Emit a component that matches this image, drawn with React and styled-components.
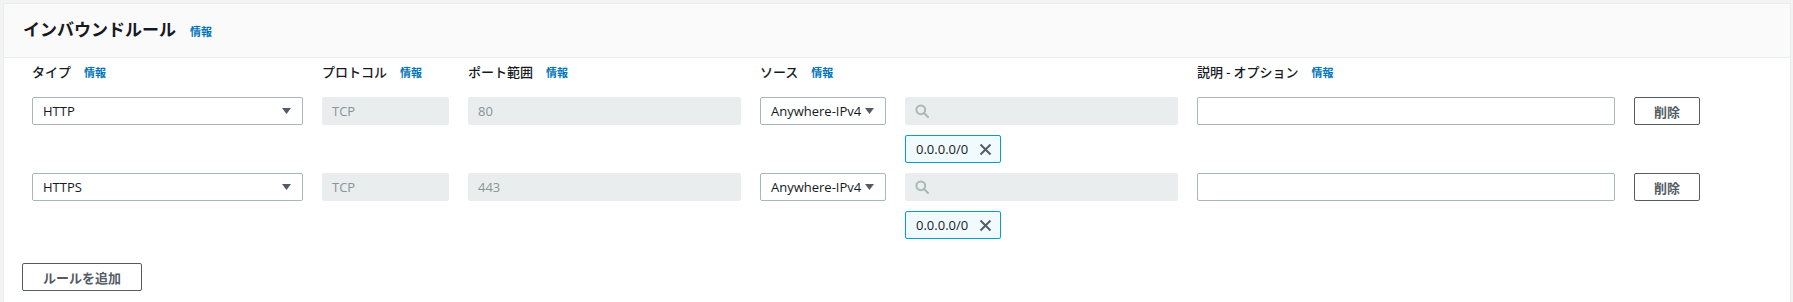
import React from 'react'
import styled, { createGlobalStyle } from 'styled-components'

const GlobalStyle = createGlobalStyle`
  html, body {
    margin: 0;
    padding: 0;
    background: #f2f3f3;
  }
  body {
    font-family: "Open Sans", "Noto Sans CJK JP", sans-serif;
    color: #16191f;
  }
`

const COLUMNS = '271px 127px 273px 126px 273px 418px 66px'

const Page = styled.div`
  padding: 3px 2px 0 3px;
`

const Panel = styled.section`
  background: #fff;
  border: 1px solid #eaeded;
  border-bottom: none;
  height: 299px;
  box-sizing: border-box;
`

const Header = styled.header`
  height: 54px;
  box-sizing: border-box;
  padding: 0 19px 4px;
  background: #fafafa;
  border-bottom: 1px solid #eaeded;
  display: flex;
  align-items: center;
`

const TitleLine = styled.div`
  display: flex;
  align-items: baseline;
  gap: 14px;
`

const Title = styled.h2`
  margin: 0;
  font-family: "Noto Sans CJK JP", sans-serif;
  font-size: 17px;
  font-weight: 700;
  line-height: 22px;
`

const Info = styled.a`
  font-family: "Noto Sans CJK JP", sans-serif;
  font-size: 11px;
  font-weight: 700;
  color: #0073bb;
  text-decoration: none;
`

const Body = styled.div`
  padding: 5px 18px 0;
`

const Grid = styled.div`
  display: grid;
  grid-template-columns: ${COLUMNS};
  column-gap: 19px;
  margin-left: 10px;
  margin-bottom: ${p => p.$mb || 0}px;
  align-items: start;
`

const Label = styled.div`
  grid-column: ${p => p.$col};
  display: flex;
  align-items: baseline;
  gap: 13px;
  font-family: "Noto Sans CJK JP", sans-serif;
  font-size: 13px;
  font-weight: 500;
  line-height: 18px;
  white-space: nowrap;
`

const Select = styled.div`
  height: 28px;
  box-sizing: border-box;
  border: 1px solid #aab7b8;
  border-radius: 2px;
  background: #fff;
  padding: 0 11px 0 10px;
  display: flex;
  align-items: center;
  justify-content: space-between;
  font-size: 13px;
  white-space: nowrap;
`

const ReadOnly = styled.div`
  height: 28px;
  box-sizing: border-box;
  border-radius: 2px;
  background: #eaeded;
  color: #879596;
  padding: 0 10px;
  display: flex;
  align-items: center;
  font-size: 13px;
`

const Stack = styled.div`
  display: flex;
  flex-direction: column;
  align-items: flex-start;
  gap: 10px;
`

const Search = styled(ReadOnly)`
  align-self: stretch;
`

const Token = styled.div`
  height: 28px;
  width: 96px;
  box-sizing: border-box;
  border: 1px solid #00a1c9;
  border-radius: 2px;
  background: #f1faff;
  padding: 0 8px 0 10px;
  display: flex;
  align-items: center;
  justify-content: space-between;
  font-size: 13px;
`

const TextInput = styled.input`
  height: 28px;
  width: 100%;
  box-sizing: border-box;
  border: 1px solid #aab7b8;
  border-radius: 2px;
  padding: 0 10px;
  font: inherit;
  font-size: 13px;
  outline: none;
`

const Button = styled.button`
  height: 28px;
  width: ${p => (p.$w ? `${p.$w}px` : 'auto')};
  box-sizing: border-box;
  padding: 0 ${p => p.$pad || 0}px;
  border: 1px solid #545b64;
  border-radius: 2px;
  background: #fff;
  color: #545b64;
  font-family: "Noto Sans CJK JP", sans-serif;
  font-size: 13px;
  font-weight: 700;
  cursor: pointer;
`

const Caret = () => (
  <svg width="9" height="6" viewBox="0 0 9 6">
    <polygon points="0,0 9,0 4.5,6" fill="#545b64" />
  </svg>
)

const SearchIcon = () => (
  <svg width="14" height="14" viewBox="0 0 14 14" fill="none" stroke="#aab7b8" strokeWidth="2">
    <circle cx="5.8" cy="5.8" r="4.4" />
    <line x1="9" y1="9" x2="13" y2="13" strokeLinecap="round" />
  </svg>
)

const CloseIcon = () => (
  <svg width="13" height="13" viewBox="0 0 13 13" stroke="#545b64" strokeWidth="2">
    <line x1="1.5" y1="1.5" x2="11.5" y2="11.5" />
    <line x1="11.5" y1="1.5" x2="1.5" y2="11.5" />
  </svg>
)

const rules = [
  { type: 'HTTP', protocol: 'TCP', port: '80', source: 'Anywhere-IPv4', cidr: '0.0.0.0/0' },
  { type: 'HTTPS', protocol: 'TCP', port: '443', source: 'Anywhere-IPv4', cidr: '0.0.0.0/0' },
]

const RuleRow = ({ rule }) => (
  <Grid $mb={10}>
    <Select>
      <span>{rule.type}</span>
      <Caret />
    </Select>
    <ReadOnly>{rule.protocol}</ReadOnly>
    <ReadOnly>{rule.port}</ReadOnly>
    <Select>
      <span>{rule.source}</span>
      <Caret />
    </Select>
    <Stack>
      <Search>
        <SearchIcon />
      </Search>
      <Token>
        <span>{rule.cidr}</span>
        <CloseIcon />
      </Token>
    </Stack>
    <TextInput type="text" />
    <Button $w={66}>削除</Button>
  </Grid>
)

const App = () => {
  return (
    <Page>
      <GlobalStyle />
      <Panel>
        <Header>
          <TitleLine>
            <Title>インバウンドルール</Title>
            <Info>情報</Info>
          </TitleLine>
        </Header>
        <Body>
          <Grid $mb={16}>
            <Label $col={1}>タイプ<Info>情報</Info></Label>
            <Label $col={2}>プロトコル<Info>情報</Info></Label>
            <Label $col={3}>ポート範囲<Info>情報</Info></Label>
            <Label $col={4}>ソース<Info>情報</Info></Label>
            <Label $col={6}>説明 - オプション<Info>情報</Info></Label>
          </Grid>
          {rules.map(rule => (
            <RuleRow key={rule.type} rule={rule} />
          ))}
          <div style={{ height: 14 }} />
          <Button $pad={20}>ルールを追加</Button>
        </Body>
      </Panel>
    </Page>
  )
}

export default App
